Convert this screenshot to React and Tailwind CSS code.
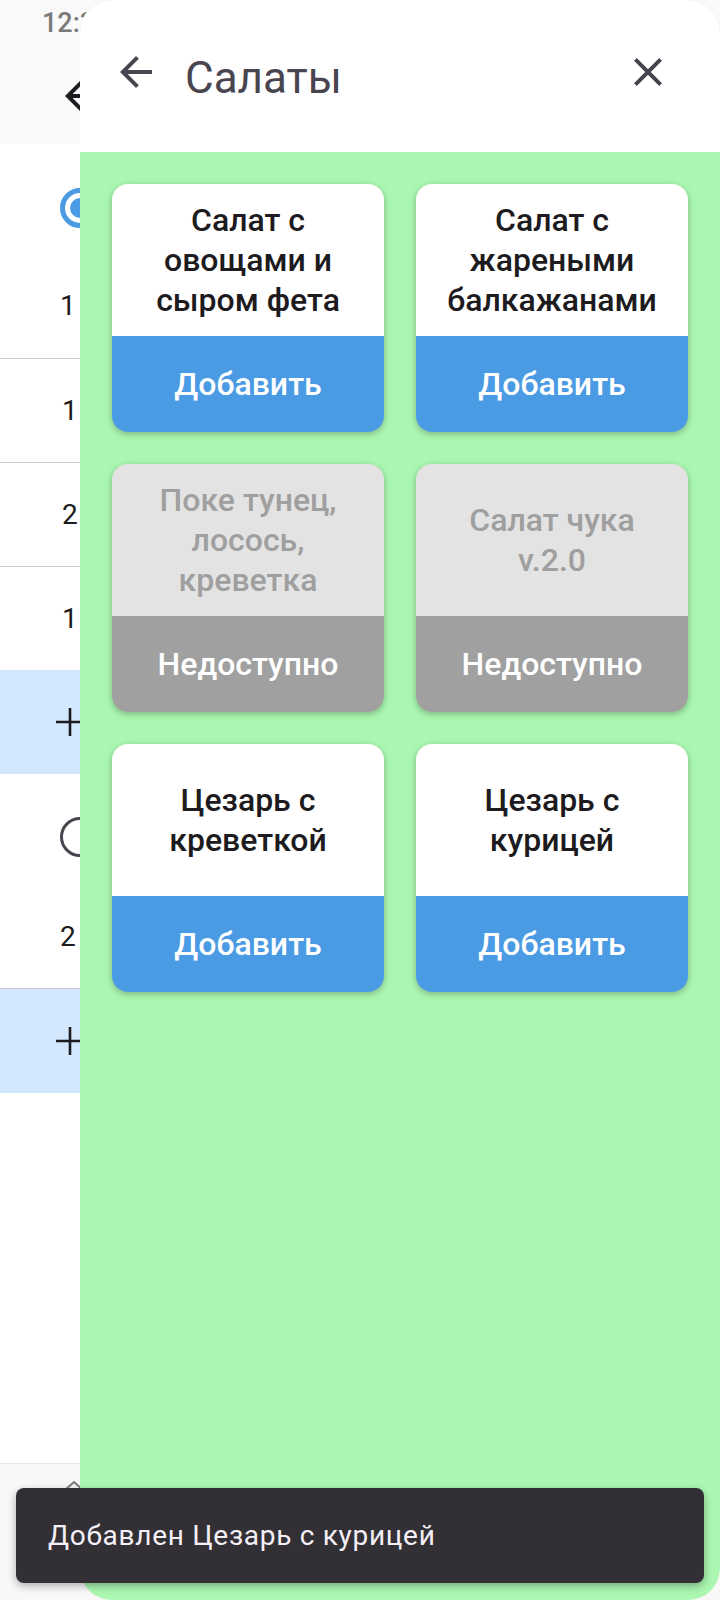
import React from "react";

const salads = [
  { name: "Салат с овощами и сыром фета", available: true },
  { name: "Салат с жареными балкажанами", available: true },
  { name: "Поке тунец, лосось, креветка", available: false },
  { name: "Салат чука v.2.0", available: false },
  { name: "Цезарь с креветкой", available: true },
  { name: "Цезарь с курицей", available: true },
];

function ArrowBack({ className }) {
  return (
    <svg viewBox="0 0 24 24" className={className} fill="currentColor">
      <path d="M20 11H7.83l5.59-5.59L12 4l-8 8 8 8 1.41-1.41L7.83 13H20v-2z" />
    </svg>
  );
}

function CloseIcon({ className }) {
  return (
    <svg viewBox="0 0 24 24" className={className} fill="currentColor">
      <path d="M19 6.41L17.59 5 12 10.59 6.41 5 5 6.41 10.59 12 5 17.59 6.41 19 12 13.41 17.59 19 19 17.59 13.41 12z" />
    </svg>
  );
}

function PlusIcon() {
  return (
    <svg viewBox="0 0 30 30" className="w-[30px] h-[30px] text-[#1d1b20]" stroke="currentColor" strokeWidth="2.6" fill="none">
      <path d="M1 15h28M15 1v28" />
    </svg>
  );
}

function Radio({ checked }) {
  return checked ? (
    <div className="w-10 h-10 rounded-full border-[5px] border-[#4a9be3] flex items-center justify-center">
      <div className="w-5 h-5 rounded-full bg-[#4a9be3]" />
    </div>
  ) : (
    <div className="w-10 h-10 rounded-full border-[3px] border-[#49454f]" />
  );
}

function QtyRow({ label }) {
  return (
    <div className="h-[104px] flex items-center pl-[62px] border-b border-[#cac4d0] text-[28px] leading-[40px] text-[#1d1b20]">
      {label}
    </div>
  );
}

function AddRow() {
  return (
    <div className="h-[104px] bg-[#d3e8fd] flex items-center pl-[55px]">
      <PlusIcon />
    </div>
  );
}

function SaladCard({ name, available }) {
  return (
    <div className="rounded-2xl overflow-hidden shadow-[0_2px_6px_rgba(0,0,0,0.28)] flex flex-col">
      <div
        className={
          available
            ? "h-[152px] bg-white flex items-center justify-center px-7 text-center text-[32px] leading-[40px] font-medium text-[#1d1b20]"
            : "h-[152px] bg-[#e3e3e3] flex items-center justify-center px-7 text-center text-[32px] leading-[40px] font-medium text-[#9f9f9f]"
        }
      >
        {name}
      </div>
      <div
        className={
          available
            ? "h-[96px] bg-[#4a9be3] flex items-center justify-center text-[32px] leading-[40px] font-medium text-white"
            : "h-[96px] bg-[#a0a0a0] flex items-center justify-center text-[32px] leading-[40px] font-medium text-white"
        }
      >
        {available ? "Добавить" : "Недоступно"}
      </div>
    </div>
  );
}

export default function App() {
  return (
    <div className="relative w-[720px] h-[1600px] overflow-hidden bg-white font-['Roboto',sans-serif]">
      {/* order screen underneath the sheet */}
      <div className="flex flex-col h-full">
        <div className="h-[144px] bg-[#f9f9f9] relative">
          <div className="pl-[42px] pt-[6px] text-[27px] leading-[34px] font-medium text-[#7a7a7a]">12:30</div>
          <ArrowBack className="absolute left-[57px] top-[72px] w-12 h-12 text-[#1d1b20]" />
        </div>

        <div className="pl-[60px] pt-[44px] pb-[32px] border-b border-[#cac4d0]">
          <Radio checked />
          <div className="mt-[58px] text-[28px] leading-[40px] text-[#1d1b20]">1 шт.</div>
        </div>
        <QtyRow label="1 шт." />
        <QtyRow label="2 шт." />
        <div className="h-[103px] flex items-center pl-[62px] text-[28px] leading-[40px] text-[#1d1b20]">1 шт.</div>
        <AddRow />

        <div className="pl-[60px] pt-[43px] pb-[31px] border-b border-[#cac4d0]">
          <Radio />
          <div className="mt-[60px] text-[28px] leading-[40px] text-[#1d1b20]">2 шт.</div>
        </div>
        <AddRow />

        <div className="flex-1" />
        <div className="h-[137px] bg-[#f8f8f8] border-t border-[#e6e6e6] pl-[62px] pt-[16px]">
          <svg viewBox="0 0 24 12" className="w-6 h-3 text-[#7a7a7a]" fill="none" stroke="currentColor" strokeWidth="2">
            <path d="M3 10l9-8 9 8" />
          </svg>
        </div>
      </div>

      {/* category sheet */}
      <div className="absolute left-[80px] top-0 w-[640px] h-[1600px] rounded-[32px] overflow-hidden flex flex-col bg-[#abf7b1]">
        <div className="h-[152px] bg-white flex items-start pt-[48px] pl-[32px] pr-[48px]">
          <ArrowBack className="w-12 h-12 text-[#49454f]" />
          <div className="ml-[25px] mt-[4px] flex-1 text-[44px] leading-[52px] text-[#49454f]">Салаты</div>
          <CloseIcon className="w-12 h-12 text-[#49454f]" />
        </div>
        <div className="grid grid-cols-2 gap-8 p-8">
          {salads.map((s) => (
            <SaladCard key={s.name} name={s.name} available={s.available} />
          ))}
        </div>
      </div>

      {/* snackbar */}
      <div className="absolute left-4 top-[1488px] w-[688px] h-[95px] rounded-lg bg-[#322f35] shadow-[0_3px_8px_rgba(0,0,0,0.3)] flex items-center pl-8">
        <span className="text-[28px] leading-[40px] tracking-[0.7px] text-[#f5eff7]">Добавлен Цезарь с курицей</span>
      </div>
    </div>
  );
}
